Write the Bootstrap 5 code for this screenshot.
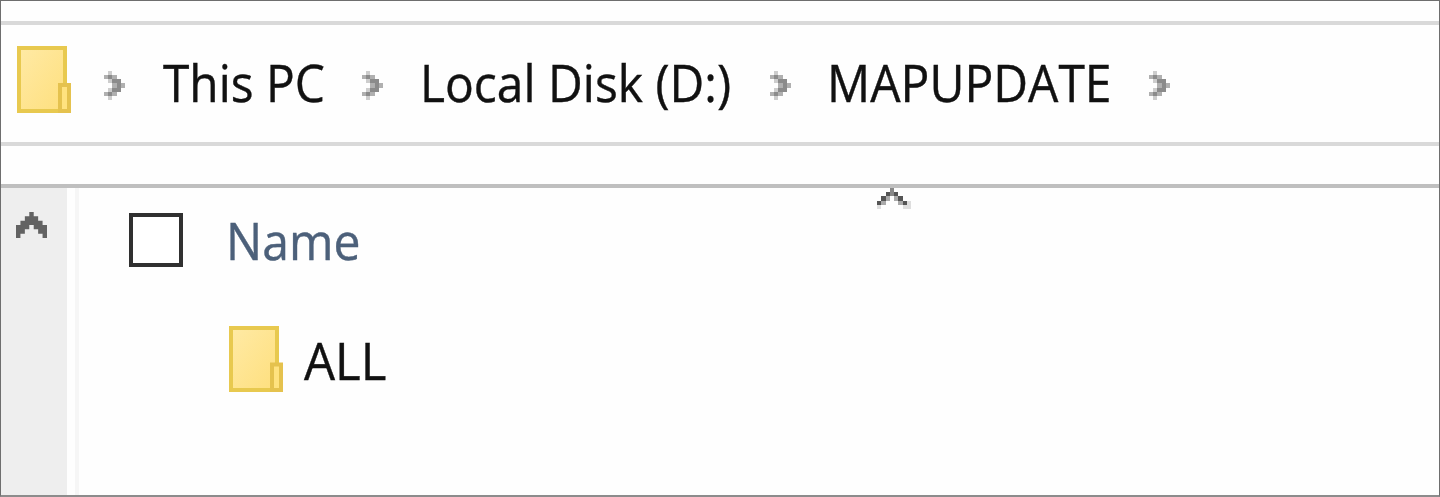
<!DOCTYPE html>
<html lang="en">
<head>
<meta charset="utf-8">
<meta name="viewport" content="width=device-width, initial-scale=1">
<title>MAPUPDATE</title>
<link href="https://cdn.jsdelivr.net/npm/bootstrap@5.3.0/dist/css/bootstrap.min.css" rel="stylesheet">
<style>
body { font-family: "Open Sans", "Noto Sans", sans-serif; }
.window { height: 497px; border: 1px solid #6e6e6e; border-width: 1px 1px 2px; border-bottom-color: #8c8c8c; background: #fefefe; }
.window svg { display: block; flex: none; }
.strip { height: 20px; }
.address { height: 125px; border-top: 4px solid #d9d9d9; border-bottom: 4px solid #d9d9d9; padding: 0 0 8px 16px; }
.chevron { width: 21px; height: 29px; margin-top: 11px; }
.strip-lower { height: 42px; border-bottom: 4px solid #bfbfbf; }
.scroller { width: 66px; background: #eee; padding: 24px 0 0 15px; }
.divider { width: 4px; margin-left: 8px; background: #f6f6f6; }
.label { display: block; flex: none; height: 70px; line-height: 70px; font-size: 52px; white-space: pre; color: #111; -webkit-text-stroke: .4px currentColor; }
.label > span { display: inline-block; transform-origin: 0 50%; }
.crumb-pc { width: 199px; padding-left: 38px; margin-right: 38px; }
.crumb-pc > span { transform: scaleX(.92); }
.crumb-disk { width: 348px; padding-left: 37px; margin-right: 39px; }
.crumb-disk > span { transform: scaleX(.922); }
.crumb-map { width: 319px; padding-left: 36px; margin-right: 39px; }
.crumb-map > span { transform: scaleX(.923); }
.heading { padding: 0 0 0 50px; height: 104px; }
.tick { width: 54px; height: 54px; border: 4px solid #303030; border-radius: 0; background: #fff; margin: 0; appearance: none; display: block; flex: none; }
.name-col { width: 694px; padding-left: 43px; color: #4c607a; }
.name-col > span { transform: scaleX(.925); }
.file-row { padding: 0 0 0 150px; height: 133px; }
.all-label { padding-left: 21px; }
.all-label > span { transform: scaleX(.945) translateY(1px); }
</style>
</head>
<body>
<svg width="0" height="0" class="position-absolute" aria-hidden="true">
  <defs>
    <linearGradient id="paper" x1="0" y1="0" x2="1" y2="1"><stop offset="0" stop-color="#ffeaa5"/><stop offset="1" stop-color="#fedf7d"/></linearGradient>
    <symbol id="folder" viewBox="0 0 54 67" preserveAspectRatio="none">
      <path d="M2 2H48V65H2Z" fill="url(#paper)" stroke="#e8c94f" stroke-width="4"/>
      <path d="M43 39H52V65H43Z" fill="#ffe27f" stroke="#e5c24e" stroke-width="4"/>
    </symbol>
    <symbol id="chev" viewBox="0 0 5 7" preserveAspectRatio="none">
      <g shape-rendering="crispEdges">
        <path d="M1 0h1v1h-1zM1 6h1v1h-1zM1 2h1v1h-1zM1 4h1v1h-1z" fill="#cdcdcd"/>
        <path d="M0 1h1v1h-1zM0 5h1v1h-1zM2 1h1v1h-1zM2 5h1v1h-1zM2 3h1v1h-1zM4 3h1v1h-1z" fill="#b0b0b0"/>
        <path d="M1 1h1v1h-1zM1 5h1v1h-1zM2 2h2v1h-2zM2 4h2v1h-2zM3 3h1v1h-1z" fill="#8b8b8b"/>
      </g>
    </symbol>
  </defs>
</svg>
<main class="window d-flex flex-column overflow-hidden">
  <div class="strip"></div>
  <nav class="address d-flex align-items-center flex-shrink-0" aria-label="Address">
    <svg width="54" height="67"><use href="#folder"/></svg>
    <svg class="chevron" style="margin-left:33px"><use href="#chev"/></svg>
    <span class="label crumb-pc mt-1"><span>This PC</span></span>
    <svg class="chevron"><use href="#chev"/></svg>
    <span class="label crumb-disk mt-1"><span>Local Disk (D:)</span></span>
    <svg class="chevron"><use href="#chev"/></svg>
    <span class="label crumb-map mt-1"><span>MAPUPDATE</span></span>
    <svg class="chevron"><use href="#chev"/></svg>
  </nav>
  <div class="strip-lower flex-shrink-0"></div>
  <div class="d-flex flex-grow-1">
    <aside class="scroller flex-shrink-0">
      <svg width="31" height="26" viewBox="0 0 7 6" preserveAspectRatio="none"><path d="M3 0h1v1h1v1h1v1h1v3h-1v-1h-1v-1h-1v-1h-1v1h-1v1h-1v1h-1v-3h1v-1h1v-1h1z" fill="#626262"/></svg>
    </aside>
    <div class="divider flex-shrink-0"></div>
    <section class="flex-grow-1">
      <div class="heading d-flex align-items-center">
        <input class="tick" type="checkbox" aria-label="Select all">
        <span class="label name-col"><span>Name</span></span>
        <svg class="align-self-start" width="34" height="21" viewBox="0 0 8 5" preserveAspectRatio="none"><g shape-rendering="crispEdges"><path d="M2 1h1v1h-1zM4 1h1v1h-1zM1 2h1v1h-1zM5 2h1v1h-1zM0 3h1v1h-1zM6 3h1v1h-1z" fill="#555"/><path d="M3 0h1v1h-1zM3 1h1v1h-1z" fill="#888"/><path d="M2 2h1v1h-1zM1 3h1v1h-1zM4 2h1v1h-1zM5 3h1v1h-1z" fill="#aaa"/><path d="M0 4h1v1h-1zM7 3h1v1h-1zM6 4h2v1h-2z" fill="#dedede"/></g></svg>
      </div>
      <div class="file-row d-flex align-items-center">
        <svg width="54" height="66"><use href="#folder"/></svg>
        <span class="label all-label"><span>ALL</span></span>
      </div>
    </section>
  </div>
</main>
<script src="https://cdn.jsdelivr.net/npm/bootstrap@5.3.0/dist/js/bootstrap.bundle.min.js"></script>
</body>
</html>
